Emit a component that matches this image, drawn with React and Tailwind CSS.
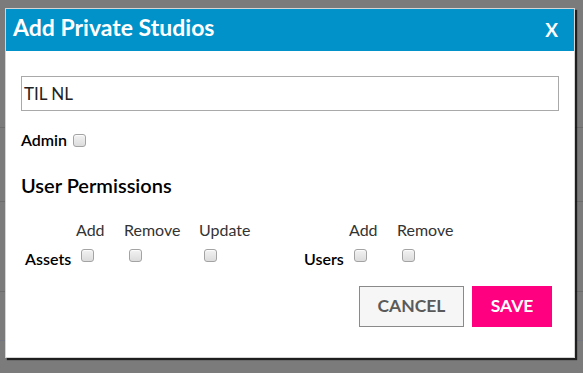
import React from 'react'

const Box = () => (
  <span className="block w-[13px] h-[13px] rounded-[3px] border border-[#a3a3a3] bg-gradient-to-b from-[#f2f2f2] to-[#dcdcdc] shadow-[inset_0_1px_1px_rgba(255,255,255,0.8)]" />
)

const Col = ({ label, width }) => (
  <div className={`flex flex-col items-start ${width}`}>
    <span className="text-[#333] text-[16px] leading-none">{label}</span>
    <span className="mt-[11px] ml-[5px]"><Box /></span>
  </div>
)

const App = () => {
  return (
    <div className="relative w-[583px] h-[373px] overflow-hidden bg-[#7b7b7b]" style={{ fontFamily: 'Lato, "Open Sans", sans-serif' }}>
      {/* page behind the overlay */}
      <div className="flex flex-col">
        <div className="h-[128px] border-b border-[#6c6c6c]" />
        <div className="h-[74px] border-b border-[#6c6c6c]" />
        <div className="h-[90px] border-b border-[#6c6c6c]" />
        <div className="h-[49px] border-b border-[#737680]" />
      </div>

      {/* Modal */}
      <div className="absolute left-[5px] top-[8px] w-[570px] h-[350px] bg-white border border-[#d4d4d4] shadow-[2px_2px_1px_rgba(0,0,0,0.75)]">
        <div className="h-[42px] bg-[#0092c9] flex items-end justify-between pl-[7px] pr-[16px] pb-[12px]">
          <h2 className="text-white font-bold text-[23px] leading-none">Add Private Studios</h2>
          <span className="text-white font-bold text-[19px] leading-none">X</span>
        </div>

        <div className="px-[15px] pt-[25px]">
          <input
            readOnly
            value="TIL NL"
            className="w-[538px] h-[35px] border border-[#a9a9a9] px-[2px] text-[17px] text-[#222] outline-none"
            style={{ fontFamily: 'Lato, sans-serif' }}
          />

          <div className="flex items-center gap-[6px] mt-[21px] text-[16px] font-semibold text-black leading-none">
            <span>Admin</span>
            <Box />
          </div>

          <h3 className="mt-[27px] text-[20px] font-semibold text-black leading-none">User Permissions</h3>

          <div className="flex items-start mt-[27px]">
            <div className="w-[55px] pt-[29px] pl-[4px] text-[16px] font-semibold text-black leading-none">Assets</div>
            <Col label="Add" width="w-[48px]" />
            <Col label="Remove" width="w-[75px]" />
            <Col label="Update" width="w-[105px]" />
            <div className="w-[45px] pt-[29px] text-[16px] font-semibold text-black leading-none">Users</div>
            <Col label="Add" width="w-[48px]" />
            <Col label="Remove" width="w-[60px]" />
          </div>

          <div className="flex justify-end gap-[8px] mt-[19px] pr-[7px]">
            <button className="w-[105px] h-[41px] bg-[#f6f6f6] border border-[#8a8a8a] text-[#5a5a5a] font-bold text-[17.5px]">CANCEL</button>
            <button className="w-[80px] h-[41px] bg-[#ff0080] text-white font-bold text-[17.5px]">SAVE</button>
          </div>
        </div>
      </div>
    </div>
  )
}

export default App
